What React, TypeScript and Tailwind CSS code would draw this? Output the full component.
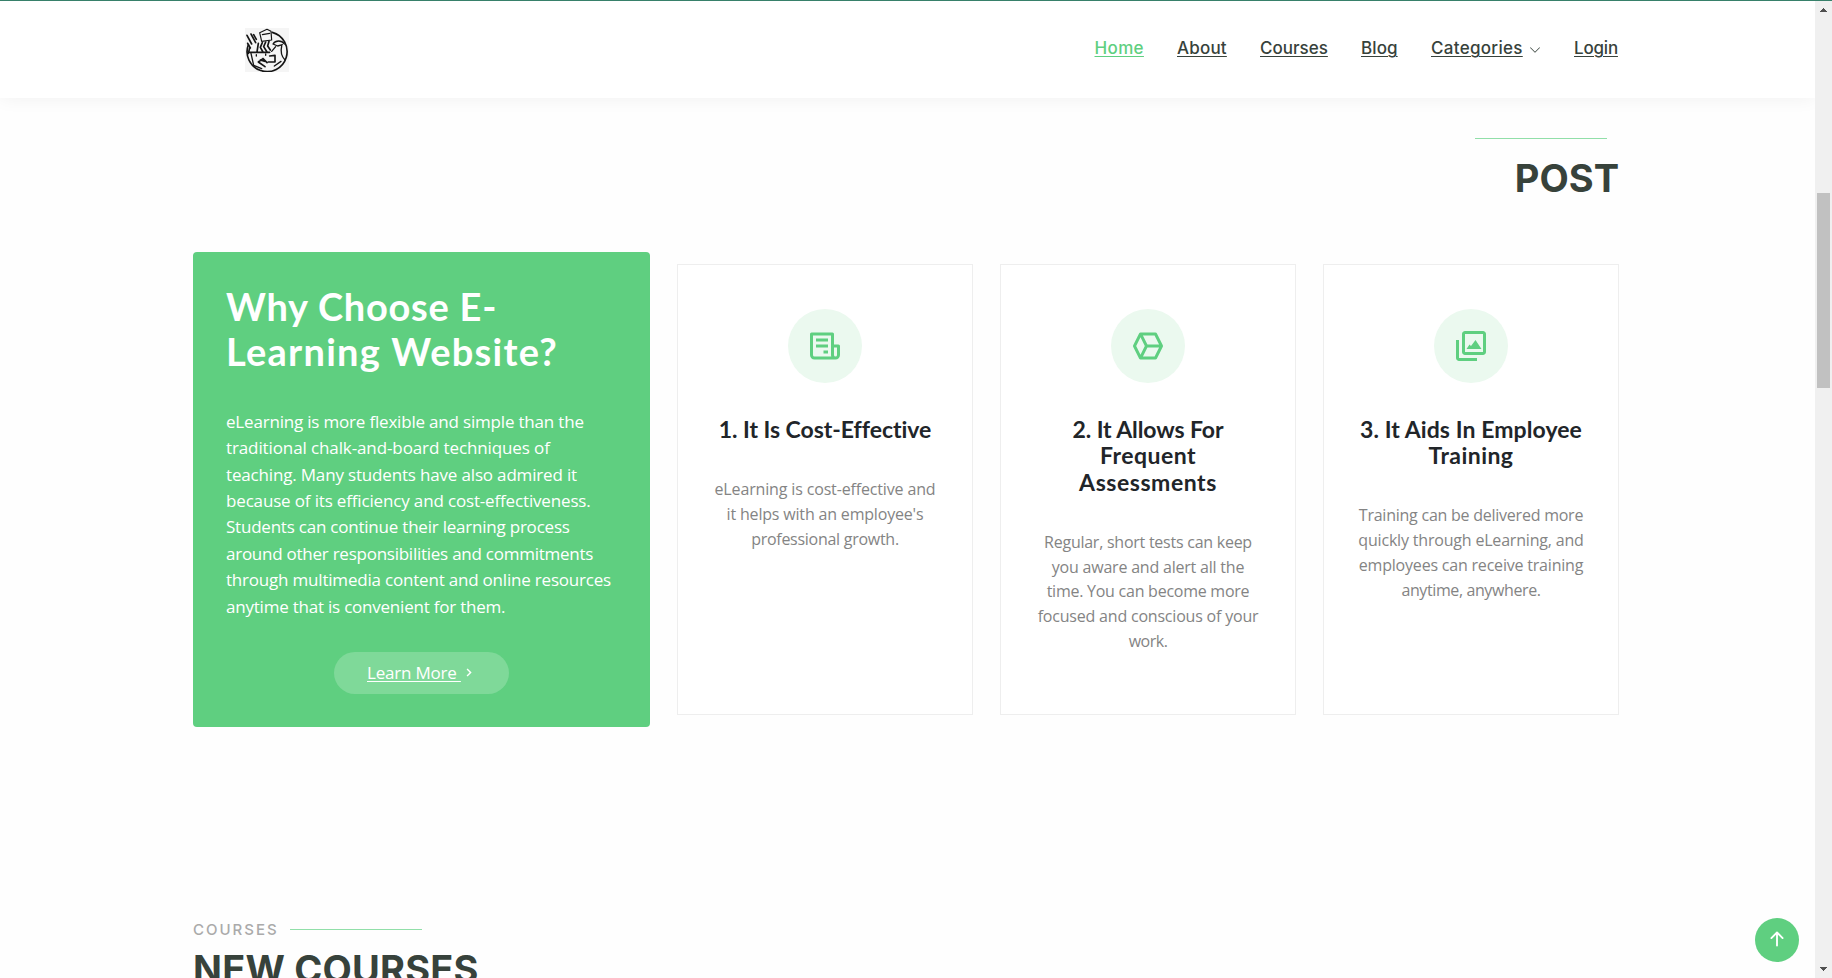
import React from 'react';
import { BiReceipt, BiCubeAlt, BiImages, BiChevronRight } from 'react-icons/bi';
import { BsChevronDown, BsArrowUpShort } from 'react-icons/bs';

type Line = [text: string, tracking: string];

const navItems = [
  { label: 'Home', width: 'w-[49.5px]', tracking: 'tracking-[0.35px]', color: 'text-[#5fcf80]' },
  { label: 'About', width: 'w-[50px]', tracking: 'tracking-[0.2px]', color: 'text-[#37423b]' },
  { label: 'Courses', width: 'w-[68px]', tracking: 'tracking-[0px]', color: 'text-[#37423b]' },
  { label: 'Blog', width: 'w-[37px]', tracking: 'tracking-[0.1px]', color: 'text-[#37423b]' },
  { label: 'Categories', width: 'w-[92px]', tracking: 'tracking-[0.3px]', color: 'text-[#37423b]', menu: true },
  { label: 'Login', width: 'w-[44px]', tracking: 'tracking-[-0.2px]', color: 'text-[#37423b]' },
];

const intro: Line[] = [
  ['eLearning is more flexible and simple than the', 'tracking-[-0.19px]'],
  ['traditional chalk-and-board techniques of', 'tracking-[-0.11px]'],
  ['teaching. Many students have also admired it', 'tracking-[-0.17px]'],
  ['because of its efficiency and cost-effectiveness.', 'tracking-[-0.16px]'],
  ['Students can continue their learning process', 'tracking-[-0.22px]'],
  ['around other responsibilities and commitments', 'tracking-[-0.25px]'],
  ['through multimedia content and online resources', 'tracking-[-0.2px]'],
  ['anytime that is convenient for them.', 'tracking-[-0.22px]'],
];

const cards: { Icon: React.ComponentType<{ className?: string }>; title: Line[]; body: Line[] }[] = [
  {
    Icon: BiReceipt,
    title: [['1. It Is Cost-Effective', 'tracking-[-0.04px]']],
    body: [
      ['eLearning is cost-effective and', 'tracking-[-0.15px]'],
      ["it helps with an employee's", 'tracking-[-0.18px]'],
      ['professional growth.', 'tracking-[-0.27px]'],
    ],
  },
  {
    Icon: BiCubeAlt,
    title: [
      ['2. It Allows For', 'tracking-[-0.1px]'],
      ['Frequent', 'tracking-[0.45px]'],
      ['Assessments', 'tracking-[0.55px]'],
    ],
    body: [
      ['Regular, short tests can keep', 'tracking-[-0.25px]'],
      ['you aware and alert all the', 'tracking-[-0.21px]'],
      ['time. You can become more', 'tracking-[-0.25px]'],
      ['focused and conscious of your', 'tracking-[-0.2px]'],
      ['work.', 'tracking-[-0.5px]'],
    ],
  },
  {
    Icon: BiImages,
    title: [
      ['3. It Aids In Employee', 'tracking-[0.08px]'],
      ['Training', 'tracking-[0.45px]'],
    ],
    body: [
      ['Training can be delivered more', 'tracking-[-0.24px]'],
      ['quickly through eLearning, and', 'tracking-[-0.19px]'],
      ['employees can receive training', 'tracking-[-0.2px]'],
      ['anytime, anywhere.', 'tracking-[-0.39px]'],
    ],
  },
];

function Lines({ lines }: { lines: Line[] }) {
  return (
    <>
      {lines.map(([text, tracking]) => (
        <span key={text} className={`block whitespace-nowrap ${tracking}`}>
          {text}
        </span>
      ))}
    </>
  );
}

function Logo() {
  return (
    <svg viewBox="0 0 132 132" className="h-11 w-11 bg-[#f5f5f5]" fill="none" stroke="#151515" strokeWidth="4" strokeLinecap="round" strokeLinejoin="round">
      <path d="M10 50A60 60 0 1 0 82 13" strokeWidth="5" />
      <path d="M6 22 20 48M18 18 32 44M8 46 16 60M26 20 34 34" strokeWidth="5" />
      <path d="M44 14 66 4 78 10 80 36 50 40ZM52 20 74 16" strokeWidth="3.5" />
      <path d="M8 73H74M14 60 10 76M40 46 36 72M52 44 46 58 54 72M62 42 56 56 66 72M72 40 68 54 76 66" strokeWidth="5" />
      <path d="M18 76 26 112 50 122M34 80V84M62 78V82" />
      <path d="M84 48C92 36 110 36 118 48M84 48 98 54 112 50M110 54C106 72 110 86 120 96M80 70 92 56M88 114 108 100" />
      <path d="M54 92 40 102 60 116M54 92 66 104M74 84 90 82 90 102 70 102M46 96 58 100" strokeWidth="5" />
    </svg>
  );
}

export default function App() {
  return (
    <div className="flex h-[978px] w-[1832px] flex-col overflow-hidden bg-[#fefefe]">
      <div className="h-px shrink-0 bg-[#37806a]" />
      <div className="flex min-h-0 flex-1">
        <div className="relative flex w-[1815px] flex-col overflow-hidden">
          <header className="flex h-[97px] shrink-0 justify-between bg-white pr-[197px] pl-[245px] shadow-[0_0_18px_rgba(0,0,0,0.06)]">
            <div className="pt-[27px]">
              <Logo />
            </div>
            <nav className="flex gap-[33px] pt-[35px] font-['Inter',sans-serif] text-[17px] leading-6 font-medium">
              {navItems.map((item) => (
                <a key={item.label} className={`flex items-start ${item.color}`}>
                  <span className={`whitespace-nowrap underline decoration-1 underline-offset-2 ${item.width} ${item.tracking}`}>{item.label}</span>
                  {item.menu && <BsChevronDown className="mt-[8px] ml-[6px] h-3 w-3" />}
                </a>
              ))}
            </nav>
          </header>

          <main className="flex w-[1619px] flex-col pl-[193px]">
            <div className="mt-10 mr-3 h-px w-[132px] self-end bg-[#91dfa9]" />
            <h2 className="mt-4 h-[46px] self-end font-['Inter',sans-serif] text-[38px] leading-[46px] font-bold text-[#37423b]">POST</h2>

            <section className="mt-[51px] flex h-[475px] items-center justify-between">
              <div className="flex h-[475px] w-[457px] flex-col rounded bg-[#5fcf80] px-[33px] pt-8 text-white">
                <h3 className="font-['Lato',sans-serif] text-[38px] leading-[45px] font-bold">
                  <span className="block whitespace-nowrap tracking-[0.75px]">Why Choose E-</span>
                  <span className="block whitespace-nowrap tracking-[1.25px]">Learning Website?</span>
                </h3>
                <p className="mt-[34.7px] font-['Open_Sans',sans-serif] text-[17px] leading-[26.4px]">
                  <Lines lines={intro} />
                </p>
                <a className="mt-8 flex h-[42px] w-[175px] items-center self-center rounded-full bg-[#7fd999] pl-[33px] font-['Open_Sans',sans-serif] text-[17px] tracking-[-0.2px]">
                  <span className="whitespace-pre underline decoration-1 underline-offset-2">{'Learn More '}</span>
                  <BiChevronRight className="-ml-px h-[17px] w-[17px]" />
                </a>
              </div>

              {cards.map(({ Icon, title, body }) => (
                <article key={title[0][0]} className="flex h-[451px] w-[296px] flex-col items-center border border-[#eeeeee] bg-white pt-[44px] text-center">
                  <div className="flex h-[74px] w-[74px] shrink-0 items-center justify-center rounded-full bg-[#ebf9ef] text-[#5fcf80]">
                    <Icon className="h-9 w-9" />
                  </div>
                  <h4 className="mt-[33px] font-['Lato',sans-serif] text-[23px] leading-[26.4px] font-bold text-[#212529]">
                    <Lines lines={title} />
                  </h4>
                  <p className="mt-[34.5px] font-['Open_Sans',sans-serif] text-[16px] leading-[24.8px] text-[#848484]">
                    <Lines lines={body} />
                  </p>
                </article>
              ))}
            </section>

            <div className="mt-[190px] flex h-6 items-center gap-[11px]">
              <h2 className="pt-0.5 font-['Inter',sans-serif] text-[15px] leading-6 font-medium tracking-[2px] text-[#aaaaaa]">COURSES</h2>
              <div className="h-px w-[132px] bg-[#91dfa9]" />
            </div>
            <p className="mt-[5px] font-['Inter',sans-serif] text-[38px] leading-[46px] font-bold whitespace-nowrap tracking-[0.2px] text-[#37423b]">NEW COURSES</p>
          </main>

          <button className="absolute right-4 bottom-4 flex h-11 w-11 items-center justify-center rounded-full bg-[#5fcf80] text-white">
            <BsArrowUpShort className="mb-0.5 h-[30px] w-[30px]" />
          </button>
        </div>

        <aside className="flex w-[17px] flex-col items-center bg-[#f0f0f0]">
          <svg viewBox="0 0 7 4" className="mt-[7px] h-1 w-[7px]" fill="#505050" shapeRendering="crispEdges">
            <path d="M3 0h1v1h1v1h1v1h1v1H0V3h1V2h1V1h1z" />
          </svg>
          <div className="mt-[181px] h-[195px] w-[13px] bg-[#c1c1c1]" />
          <svg viewBox="0 0 7 4" className="mt-auto mb-[7px] h-1 w-[7px]" fill="#505050" shapeRendering="crispEdges">
            <path d="M0 0h7v1H6v1H5v1H4v1H3V3H2V2H1V1H0z" />
          </svg>
        </aside>
      </div>
    </div>
  );
}
